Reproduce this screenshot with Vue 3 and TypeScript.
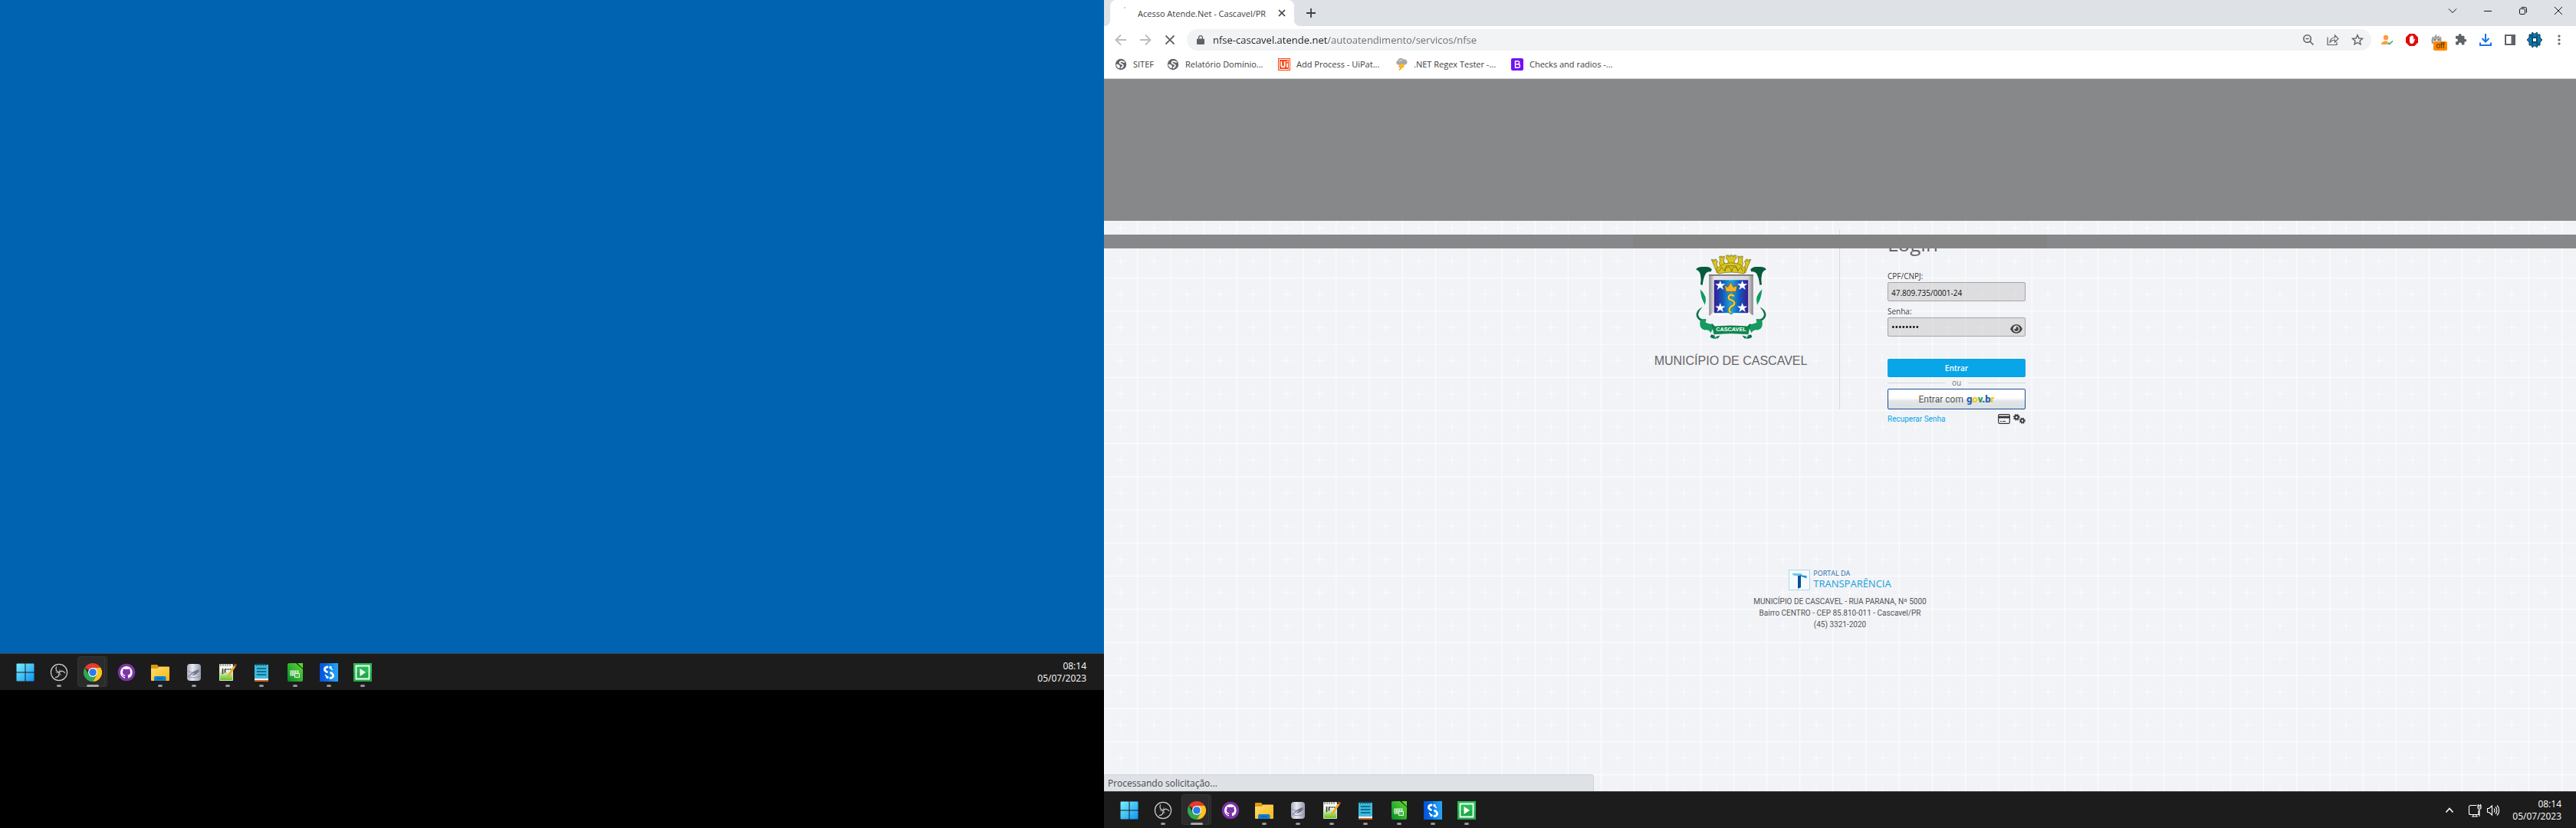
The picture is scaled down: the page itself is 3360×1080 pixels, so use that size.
<script setup lang="ts">
import { ref } from 'vue'

interface TaskItem {
  id: string
  label: string
  running: boolean
  active?: boolean
}

const tasks: TaskItem[] = [
  { id: 'windows', label: 'Iniciar', running: false },
  { id: 'obs', label: 'OBS Studio', running: true },
  { id: 'chrome', label: 'Google Chrome', running: true, active: true },
  { id: 'github', label: 'GitHub Desktop', running: false },
  { id: 'folder', label: 'Explorador de Arquivos', running: true },
  { id: 'database', label: 'Banco de dados', running: true },
  { id: 'editor', label: 'Notepad++', running: true },
  { id: 'notes', label: 'Bloco de Notas', running: true },
  { id: 'calc', label: 'LibreOffice Calc', running: true },
  { id: 'studio', label: 'Studio', running: true },
  { id: 'player', label: 'Camtasia', running: true },
]

const bookmarks = [
  { icon: 'globe', text: 'SITEF', width: 28 },
  { icon: 'globe', text: 'Relatório Domínio...', width: 105 },
  { icon: 'uipath', text: 'Add Process - UiPat...', width: 113 },
  { icon: 'storm', text: '.NET Regex Tester -...', width: 111 },
  { icon: 'bootstrap', text: 'Checks and radios -...', width: 112 },
]

const extensions = ['person', 'stop', 'fox', 'puzzle', 'download', 'panel', 'profile', 'dots']
const windowButtons = ['chevron-down', 'minimize', 'restore', 'close']

const url = ref('nfse-cascavel.atende.net/autoatendimento/servicos/nfse')
const cnpj = ref('47.809.735/0001-24')
const senha = ref('cascavel')
</script>

<template>
  <svg class="sprite" aria-hidden="true">
    <defs>
      <linearGradient id="g-win" x1="0" y1="0" x2="1" y2="1"><stop offset="0" stop-color="#7df0fb" /><stop offset="1" stop-color="#0a94f5" /></linearGradient>
      <linearGradient id="g-fold" x1="0" y1="0" x2="1" y2="1"><stop offset="0" stop-color="#ffdf70" /><stop offset="1" stop-color="#fbb615" /></linearGradient>
      <linearGradient id="g-db" x1="0" x2="1"><stop offset="0" stop-color="#a7abc0" /><stop offset=".4" stop-color="#e8eaf2" /><stop offset="1" stop-color="#9498ac" /></linearGradient>
      <linearGradient id="g-calc" x1="0" y1="1" x2="1" y2="0"><stop offset="0" stop-color="#08882c" /><stop offset="1" stop-color="#5ddc30" /></linearGradient>
      <linearGradient id="g-ed" x1="0" y1="0" x2="0" y2="1"><stop offset=".35" stop-color="#f6fbef" /><stop offset="1" stop-color="#64bf10" /></linearGradient>
      <linearGradient id="g-stu" x1="0" x2="1"><stop offset="0" stop-color="#0453dc" /><stop offset=".5" stop-color="#0873ea" /><stop offset=".5" stop-color="#0b84ec" /><stop offset="1" stop-color="#2ca4f2" /></linearGradient>
      <linearGradient id="g-shield" x1="0" x2="1"><stop offset="0" stop-color="#3a1b92" /><stop offset=".25" stop-color="#1457b8" /><stop offset=".5" stop-color="#19a9e4" /><stop offset=".75" stop-color="#1457b8" /><stop offset="1" stop-color="#3a1b92" /></linearGradient>
      <linearGradient id="g-steel" x1="0" x2="1"><stop offset="0" stop-color="#8d8d8f" /><stop offset=".12" stop-color="#e6e6e8" /><stop offset=".88" stop-color="#d6d6d8" /><stop offset="1" stop-color="#868688" /></linearGradient>
      <linearGradient id="g-h" x1="0" x2="1"><stop offset="0" stop-color="#fff" stop-opacity="0" /><stop offset=".5" stop-color="#fff" /><stop offset="1" stop-color="#fff" stop-opacity="0" /></linearGradient>
      <linearGradient id="g-v" x1="0" y1="0" x2="0" y2="1"><stop offset="0" stop-color="#fff" stop-opacity="0" /><stop offset=".5" stop-color="#fff" /><stop offset="1" stop-color="#fff" stop-opacity="0" /></linearGradient>
    </defs>

    <symbol id="t-windows" viewBox="0 0 24 24"><path fill="url(#g-win)" d="M.5 1.5a1 1 0 0 1 1-1h10v11H.5zM12.5.5h10a1 1 0 0 1 1 1v10h-11zM.5 12.5h11v11h-10a1 1 0 0 1-1-1zM12.5 12.5h11v10a1 1 0 0 1-1 1h-10z" /></symbol>
    <symbol id="t-obs" viewBox="0 0 24 24">
      <circle cx="12" cy="12" r="10.6" fill="#1d1c1e" stroke="#cfcfcf" stroke-width="1.2" />
      <g fill="none" stroke="#c4c4c4" stroke-width="1.3"><path d="M12 12c-3.500-1-5-4-3.300-7.500" /><path d="M12 12c2.600-2.600 6-2.300 8 1" /><path d="M12 12c.9 3.600-1 6.300-5 6.700" /><path d="M12.300 11.500c-.2-1.600.2-2.600 1.200-3.400M11.500 12.300c-1.700.5-2.800.3-3.800-.6M12.600 12.500c1.300 1.200 1.600 2.300 1.100 3.700" stroke-width=".7" /></g>
    </symbol>
    <symbol id="t-chrome" viewBox="0 0 24 24">
      <path fill="#e33b2e" d="M12 12 1.600 6A12 12 0 0 1 22.400 6z" />
      <path fill="#fcc31e" d="M12 12V6h10.400A12 12 0 0 1 12 24l5.200-9z" />
      <path fill="#2da94f" d="M12 12l5.200 3L12 24A12 12 0 0 1 1.600 6l5.200 9z" />
      <circle cx="12" cy="12" r="6" fill="#fff" /><circle cx="12" cy="12" r="4.8" fill="#2b7de9" />
    </symbol>
    <symbol id="t-github" viewBox="0 0 24 24">
      <circle cx="12" cy="12" r="11.2" fill="#7d35a8" />
      <path fill="#fff" d="M12 4.100a8 8 0 0 0-2.500 15.600c.4.100.5-.2.500-.4v-1.500c-2.200.5-2.700-1-2.700-1-.4-.9-.9-1.200-.9-1.200-.7-.5.1-.5.1-.5.8.1 1.200.8 1.200.8.7 1.300 1.900.9 2.300.7.1-.5.3-.9.5-1.100-1.800-.2-3.600-.9-3.600-4 0-.9.3-1.600.8-2.100-.1-.2-.4-1 .1-2.100 0 0 .7-.2 2.200.8a7.500 7.500 0 0 1 4 0c1.500-1 2.200-.8 2.200-.8.5 1.100.2 1.900.1 2.100.5.600.8 1.300.8 2.100 0 3.100-1.900 3.800-3.700 4 .3.300.6.800.6 1.500v2.200c0 .2.1.5.5.4A8 8 0 0 0 12 4.100z" />
    </symbol>
    <symbol id="t-folder" viewBox="0 0 24 24"><path fill="#dc9a0c" d="M0 3a1 1 0 0 1 1-1h7l2 2.500L8 8H0z" /><path fill="url(#g-fold)" d="M0 7h8l2.500-2.500H23a1 1 0 0 1 1 1V22a1 1 0 0 1-1 1H1a1 1 0 0 1-1-1z" /><path fill="#1180ce" d="M4 23v-4a2 2 0 0 1 2-2h11.500a2 2 0 0 1 2 2v4z" /><path fill="#0a5ba0" d="M8 19.500h7.500v1.200H8z" /></symbol>
    <symbol id="t-database" viewBox="0 0 24 24"><rect x="3" y="1" width="18" height="22" rx="4" fill="url(#g-db)" /><path d="M3.500 10c4 3 13 3 17 0M3.500 16.500c4 3 13 3 17 0" fill="none" stroke="#868aa0" stroke-width=".9" /><path fill="#70748a" d="M4 19c3-5 7-9 15-11-1 5-5 8-10 8l5-4c-4 1-7 4-10 7z" /></symbol>
    <symbol id="t-editor" viewBox="0 0 24 24"><path fill="url(#g-ed)" stroke="#dedede" d="M1.500 1.500h17v21h-17z" /><path d="M3 1v3M6 1v3M9 1v3M12 1v3M15 1v3" stroke="#777" stroke-width="1.2" /><path d="M5.500 7v7M8.500 7.500v5M8.500 8h2M11.500 8h2M14.500 8h2" stroke="#333" stroke-width="1.6" fill="none" /><path fill="#edac25" d="m20 3 2.500 1.500L14 17l-2.500 2 .5-3.500z" /><path fill="#be4c36" d="m20.200 2.500 1-2L24 2l-1.300 2.500z" /></symbol>
    <symbol id="t-notes" viewBox="0 0 24 24"><path fill="#40bbdd" d="M3 2h18v19H3z" /><path d="M5.500.5v3M8.500.5v3M11.500.5v3M14.500.5v3M17.500.5v3" stroke="#11546f" stroke-width="1.5" /><path d="M6.500 7h11M6.500 11h11M6.500 15h11" stroke="#0d6f94" stroke-width="1.8" stroke-linecap="round" /><path fill="#f4f4f4" d="M3 20h18v2H3z" /><path fill="#c76522" d="M3 22h18v2H3z" /></symbol>
    <symbol id="t-calc" viewBox="0 0 24 24"><path fill="url(#g-calc)" d="M4 0h9l9 8v14a2 2 0 0 1-2 2H4a2 2 0 0 1-2-2V2a2 2 0 0 1 2-2z" /><path fill="#58dc24" d="M15 0h7v7z" /><path fill="none" stroke="#e6f7e8" stroke-width="1.1" d="M6 10h10v6H6zM6 12h10M6 14h10M9 10v6M12 10v6" /><path fill="#51b849" stroke="#e6f7e8" d="M11.500 13.500h6v5h-6z" /></symbol>
    <symbol id="t-studio" viewBox="0 0 24 24"><path fill="url(#g-stu)" d="M0 0h24v24H0z" /><path d="M10 5c-4 .5-4.500 4-2 5.500l1.500 1M14 19.500c4-.5 4.500-4 2-6l-1.500-1" fill="none" stroke="#fff" stroke-width="2.8" stroke-linecap="round" /><path d="M16.500 8.500 14 6.500M7.500 15.500l2 2.500" stroke="#fff" stroke-width="1.600" stroke-linecap="round" /><circle cx="14" cy="5.500" r="1.7" fill="#fff" /><circle cx="10" cy="18.500" r="1.7" fill="#fff" /></symbol>
    <symbol id="t-player" viewBox="0 0 24 24"><path fill="#20aa4b" d="M0 0h24v24H0z" /><path fill="#2fcb62" d="M0 0h24v12H0z" opacity=".5" /><path fill="none" stroke="#f2fff5" stroke-width="1.8" d="M3.500 3.500h17v17h-17z" /><path fill="#fff" d="m8.500 7 7.500 5-7.500 5z" /></symbol>

    <symbol id="b-globe" viewBox="0 0 16 16"><circle cx="8" cy="8" r="7.2" fill="#5f6368" /><path fill="none" stroke="#fff" stroke-width="1.7" stroke-linecap="round" d="M12.200 5C9.500 3.300 6 4 6.500 6s4.500 1 4.500 3.500c0 1.500-1.500 2.200-2.500 3" /><path fill="#fff" d="M1.800 8c2-.6 4.500.4 5 2.200.3 1.200-.6 1.600-.5 3C3.500 12.500 1.900 10.500 1.800 8z" /></symbol>
    <symbol id="b-uipath" viewBox="0 0 16 16"><path fill="#fa4616" d="M0 0h16v16H0z" /><path fill="none" stroke="#fff" stroke-width="1" d="M1.500 1.500h13v13h-13z" /><path fill="none" stroke="#fff" stroke-width="1.8" d="M4.300 4v5.200c0 3 4.400 3 4.400 0V4M12 6.500V12M12 3.500v1.600" /></symbol>
    <symbol id="b-storm" viewBox="0 0 16 16"><path fill="#a6a8ab" d="M3.500 8.500A3 3 0 0 1 3.300 2.800 4 4 0 0 1 10.500 1.500 3.300 3.300 0 0 1 13 8.500z" /><path fill="#d0d2d4" d="M4 4.500A4 4 0 0 1 10 2.500c-2 0-3 2-6 2z" /><path fill="#f9bc1c" stroke="#d88f08" stroke-width=".5" d="M6.500 7h5L9.800 10h2L5 16l1.600-4.500H4.300z" /></symbol>
    <symbol id="b-bootstrap" viewBox="0 0 16 16"><rect width="16" height="16" rx="2" fill="#7311f5" /><path fill="none" stroke="#fff" stroke-width="1.4" d="M5.500 3.700h3.200a2 2 0 0 1 0 4.100H5.500zM5.500 7.800h3.700a2.200 2.200 0 0 1 0 4.500H5.500z" /></symbol>

    <symbol id="x-person" viewBox="0 0 16 16"><circle cx="6" cy="5" r="3.2" fill="#ff9b38" /><path fill="#ff9b38" d="M0 14c0-3 3-4.500 6-4.500 1 0 1.600.1 2.200.4L7.500 12l1.800 2z" /><path d="m8.500 11.500 2 2 4.500-4" fill="none" stroke="#21a05a" stroke-width="1.4" /></symbol>
    <symbol id="x-stop" viewBox="0 0 16 16"><path fill="#e1090d" d="M4.700 0h6.600L16 4.700v6.600L11.300 16H4.700L0 11.300V4.700z" /><path fill="#fff" d="M5 8V4.500c0-.8 1.200-.8 1.200 0V3.300c0-.8 1.300-.8 1.300 0v-.6c0-.8 1.300-.8 1.300 0v.8c0-.8 1.300-.8 1.300 0v4.700l1-1.400c.5-.6 1.300-.1 1 .5L10.500 11c-.7 1.400-1.300 2-2.600 2C5.800 13 5 11.800 5 10z" /></symbol>
    <symbol id="x-fox" viewBox="0 0 16 16"><path fill="#a3a3a3" d="M2 13C.8 9 1.500 6 3.500 3l1 2L7.500.5 9 4l2.500-2 .5 3 2-1.500c.6 3 1 6-.5 9.500z" /><path fill="#e3e3e3" d="m4 9 2-3 2 2 2-2 2 3v4H4z" /><path stroke="#222" stroke-width="1.3" d="M5 8.200h2M9.500 8.200h2" /></symbol>
    <symbol id="x-puzzle" viewBox="0 0 16 16"><path fill="#5f6368" d="M13.500 7h-1V4a1.300 1.300 0 0 0-1.300-1.300H8.500v-.9a1.800 1.800 0 0 0-3.600 0v.9H2.300A1.300 1.300 0 0 0 1 4v2.600h.9a2 2 0 0 1 0 4H1v2.600a1.300 1.300 0 0 0 1.300 1.300h2.600v-.9a2 2 0 0 1 4 0v.9h2.300a1.300 1.300 0 0 0 1.300-1.300v-2.600h1a1.800 1.800 0 0 0 0-3.600z" /></symbol>
    <symbol id="x-download" viewBox="0 0 16 16"><path d="M8 0v10M3.500 6 8 10.500 12.500 6M1 11.500V15h14v-3.500" fill="none" stroke="#1a73e8" stroke-width="2" /></symbol>
    <symbol id="x-panel" viewBox="0 0 16 16"><path d="M2 2h12v12H2z" fill="#fff" stroke="#5f6368" stroke-width="2" /><path fill="#5f6368" d="M9.500 2H14v12H9.500z" /></symbol>
    <symbol id="x-profile" viewBox="0 0 20 20"><path fill="#087cb2" stroke="#123c54" stroke-width="1" d="m7 0 3 2.500L13 0l1 3h3v4l3 3-3 3v4h-3l-1 3-3-2.500L7 20l-1-3H3v-4l-3-3 3-3V3h3z" /><path fill="none" stroke="#123c54" stroke-width="1" d="m3 7 4-4v11M13 3v4H6M17 13l-4 4V6M7 17v-4h7" /><path fill="#fff" stroke="#123c54" d="M7.500 7.500h5v5h-5z" /></symbol>
    <symbol id="x-dots" viewBox="0 0 16 16"><g fill="#5f6368"><circle cx="8" cy="3" r="1.6" /><circle cx="8" cy="8" r="1.6" /><circle cx="8" cy="13" r="1.6" /></g></symbol>

    <symbol id="w-chevron-down" viewBox="0 0 12 12"><path d="m1 3.500 5 5 5-5" fill="none" stroke="#111" /></symbol>
    <symbol id="w-minimize" viewBox="0 0 12 12"><path d="M1 6.500h10" stroke="#111" /></symbol>
    <symbol id="w-restore" viewBox="0 0 12 12"><rect x="1.5" y="3.5" width="7" height="7" rx="1.2" fill="none" stroke="#111" /><path d="M3.500 1.500h5a2 2 0 0 1 2 2v5" fill="none" stroke="#111" /></symbol>
    <symbol id="w-close" viewBox="0 0 12 12"><path d="m1 1 10 10M11 1 1 11" stroke="#111" /></symbol>
  </svg>

  <div class="screens">
    <section class="screen-left">
      <div class="wallpaper"></div>
      <footer class="taskbar">
        <nav class="tasks">
          <button v-for="t in tasks" :key="t.id" class="task" :class="{ active: t.active }" :aria-label="t.label">
            <svg class="task-icon"><use :href="'#t-' + t.id" /></svg>
            <span v-if="t.running" class="mark"></span>
          </button>
        </nav>
        <div class="tray">
          <time class="clock"><span>08:14</span><span>05/07/2023</span></time>
        </div>
      </footer>
      <div class="void"></div>
    </section>

    <section class="screen-right">
      <header class="tabstrip">
        <div class="tab">
          <span class="spinner"></span>
          <span class="tab-title">Acesso Atende.Net - Cascavel/PR</span>
          <button class="plain" aria-label="Fechar guia"><svg width="10" height="10" viewBox="0 0 10 10"><path d="m1 1 8 8M9 1 1 9" stroke="#3c4043" stroke-width="1.7" /></svg></button>
        </div>
        <button class="plain new-tab" aria-label="Nova guia"><svg width="12" height="12" viewBox="0 0 12 12"><path d="M6 0v12M0 6h12" stroke="#3c4043" stroke-width="1.8" /></svg></button>
        <div class="win-buttons">
          <button v-for="w in windowButtons" :key="w" class="plain win" :aria-label="w"><svg width="12" height="12"><use :href="'#w-' + w" /></svg></button>
        </div>
      </header>

      <div class="toolbar">
        <div class="nav">
          <button class="plain" aria-label="Voltar"><svg width="16" height="16" viewBox="0 0 16 16"><path d="M15 8H2M8 1.500 1.500 8 8 14.500" fill="none" stroke="#babcbe" stroke-width="1.8" /></svg></button>
          <button class="plain" aria-label="Avançar"><svg width="16" height="16" viewBox="0 0 16 16"><path d="M1 8h13M8 1.500 14.500 8 8 14.500" fill="none" stroke="#babcbe" stroke-width="1.8" /></svg></button>
          <button class="plain" aria-label="Parar"><svg width="16" height="16" viewBox="0 0 16 16"><path d="m2.500 2.500 11 11M13.500 2.500l-11 11" stroke="#5f6368" stroke-width="1.8" /></svg></button>
        </div>
        <div class="omnibox">
          <svg width="10" height="12" viewBox="0 0 10 12"><path fill="#5f6368" fill-rule="evenodd" d="M1 4.500h1V3a3 3 0 0 1 6 0v1.500h1a1 1 0 0 1 1 1V11a1 1 0 0 1-1 1H1a1 1 0 0 1-1-1V5.500a1 1 0 0 1 1-1zm2.300 0h3.400V3a1.700 1.700 0 0 0-3.400 0z" /></svg>
          <input v-model="url" class="url" type="text" aria-label="Endereço" />
          <div class="omni-actions">
            <button class="plain" aria-label="Zoom"><svg width="16" height="16" viewBox="0 0 16 16"><circle cx="6.5" cy="6.5" r="4.7" fill="none" stroke="#5f6368" stroke-width="1.6" /><path d="m10 10 4.500 4.500M4.500 6.500h4" stroke="#5f6368" stroke-width="1.6" /></svg></button>
            <button class="plain" aria-label="Compartilhar"><svg width="16" height="16" viewBox="0 0 16 16"><path d="M1 4.500v10h12V11M4 11c.5-4 3-6 6.500-6V2L15 6.500 10.500 11V8C8 8 6 9 4 11z" fill="none" stroke="#5f6368" stroke-width="1.2" /></svg></button>
            <button class="plain" aria-label="Favorito"><svg width="16" height="16" viewBox="0 0 16 16"><path d="m8 1.800 1.900 4.200 4.500.4-3.400 3 1 4.500-4-2.400-4 2.400 1-4.500-3.400-3 4.500-.4z" fill="none" stroke="#5f6368" stroke-width="1.4" /></svg></button>
          </div>
        </div>
        <div class="extensions">
          <button v-for="x in extensions" :key="x" class="plain ext" :aria-label="x">
            <svg :class="x === 'profile' ? 'avatar' : 'ext-icon'"><use :href="'#x-' + x" /></svg>
            <span v-if="x === 'fox'" class="badge">off</span>
          </button>
        </div>
      </div>

      <nav class="bookmarks">
        <a v-for="b in bookmarks" :key="b.text" href="#" class="bookmark">
          <svg width="16" height="16"><use :href="'#b-' + b.icon" /></svg>
          <span :style="{ width: b.width + 'px' }">{{ b.text }}</span>
        </a>
      </nav>

      <main class="page">
        <svg class="backdrop" aria-hidden="true">
          <defs>
            <pattern id="mesh" width="48" height="48" patternUnits="userSpaceOnUse" patternTransform="scale(.9)">
              <path d="M0 .5h48M.5 0v48" stroke="#fff" stroke-width="1.300" opacity=".9" />
              <rect x="12" y="23.5" width="25" height="1.5" fill="url(#g-h)" opacity=".7" />
              <rect x="23.5" y="12" width="1.5" height="25" fill="url(#g-v)" opacity=".7" />
            </pattern>
          </defs>
          <rect width="100%" height="100%" fill="url(#mesh)" />
        </svg>

        <div class="login-panel">
          <div class="city">
            <svg class="crest" viewBox="36 36 278 334" role="img" aria-label="Brasão de Cascavel">
              <g fill="#d9c51f" stroke="#6d6412" stroke-width="2">
                <path d="M97 55h7v6h5v-7h7v6h6l-4 14 6 14 10 16-15 4-10-26z" />
                <path d="M253 55h-7v6h-5v-7h-7v6h-6l4 14-6 14-10 16 15 4 10-26z" />
                <path d="M129 42h8v5h5v-5h7l-3 20 6 10-18 14-6-16 3-10zM221 42h-8v5h-5v-5h-7l3 20-6 10 18 14 6-16-3-10z" />
                <path d="M156 38h9v6h5v-6h11v6h5v-6h9v15l-7 5v13h-25V58l-7-5z" />
                <path d="m118 90 28-18q29-9 58 0l28 18-7 21q-50-12-100 0z" />
              </g>
              <path d="m128 101 9-16 12 14 7-19h38l7 19 12-14 9 16M151 103q1-18 13-18t12 18M178 103q0-18 11-18t13 18" fill="none" stroke="#81761c" stroke-width="3" />
              <g id="mantle">
                <path fill="#075b3a" d="M36 94q9-13 34-10 20-3 29 10l-4 9q-10-3-18 5-10 11-15 48l-8-3q4-18 0-38-3-16-18-21z" />
                <path fill="#0c9b61" d="M53 172q15 14 21 31 3 14-2 31-16-25-19-62z" />
                <path fill="#087346" d="M62 242q-14 14-17 28 2 15 15 20l17 2-4 9-17-3q-21-13-18-30 3-17 24-26z" />
                <path fill="#169a60" d="M52 300q8-12 24-11l-3 13q14 9 31 8l2 11-11 23q-8-14-24-11-22-3-19-33z" />
                <path fill="#08754a" d="m97 350 13 4q-2 8 9 12-19 4-27-7zM112 360l20-6-10 13z" />
              </g>
              <use href="#mantle" transform="matrix(-1 0 0 1 350 0)" />
              <path fill="url(#g-steel)" d="M88 114h174v160q-8 0-16-12h-55l-16 10-16-10h-55q-8 12-16 15z" />
              <path fill="#707074" d="M88 114h174v5H88z" />
              <path fill="#fff" d="M105 264h140v10H105z" />
              <path fill="url(#g-shield)" d="M108 136h134v130h-58l-9 7-9-7h-58z" />
              <g fill="#fff"><path id="star" d="m132 138 5 13h15l-12 9 5 14-13-9-13 9 5-14-12-9h15z" /><use href="#star" x="87" /><use href="#star" y="88" /><use href="#star" x="87" y="88" /></g>
              <path fill="#f6b12b" stroke="#684709" stroke-width="2" d="m149 157 13 7 11-20 12 20 14-7-5 25h-39z" />
              <path d="M187 200q-13-12-21 0-6 11 11 15 19 8 6 21-19 9-15 22 3 4 8 6" fill="none" stroke="#705110" stroke-width="10" />
              <path d="M187 200q-13-12-21 0-6 11 11 15 19 8 6 21-19 9-15 22 3 4 8 6" fill="none" stroke="#f8cf35" stroke-width="7" />
              <path fill="#08894d" stroke="#066b3b" stroke-width="2" d="M111 319q64-6 128 0l11-11-8 41q-67-7-134 0l-9-41z" />
              <text x="175" y="339" text-anchor="middle" class="crest-text">CASCAVEL</text>
            </svg>
            <p class="city-name">MUNICÍPIO DE CASCAVEL</p>
          </div>

          <form class="login-form" @submit.prevent>
            <h1>Login</h1>
            <label for="cnpj">CPF/CNPJ:</label>
            <input id="cnpj" v-model="cnpj" class="field" type="text" />
            <label for="senha" class="second">Senha:</label>
            <div class="password">
              <input id="senha" v-model="senha" class="field" type="password" />
              <button type="button" class="plain eye" aria-label="Mostrar senha"><svg width="16" height="14" viewBox="0 0 16 14"><path fill="#444" fill-rule="evenodd" d="M8 1c3.500 0 6.200 2.300 7.600 5.200a2 2 0 0 1 0 1.600C14.200 10.700 11.500 13 8 13S1.800 10.700.4 7.800a2 2 0 0 1 0-1.600C1.800 3.300 4.500 1 8 1zm0 1.600a4.400 4.400 0 1 0 0 8.800 4.400 4.400 0 0 0 0-8.800z" /><path fill="#444" d="M8 4.100a2.900 2.900 0 1 1-2.900 2.900c.8.500 2 .3 2.400-.5.400-.7.200-1.600.5-2.400z" /></svg></button>
            </div>
            <button type="submit" class="enter">Entrar</button>
            <div class="or"><span>ou</span></div>
            <button type="button" class="gov"><span>Entrar com</span><b><i class="blue">g</i><i class="yellow">o</i><i class="green">v</i><i class="blue">.b</i><i class="yellow">r</i></b></button>
            <div class="links">
              <a href="#">Recuperar Senha</a>
              <button type="button" class="plain" aria-label="Certificado"><svg width="16" height="13" viewBox="0 0 16 13"><rect x=".7" y=".7" width="14.6" height="11.6" rx="1.2" fill="none" stroke="#333" stroke-width="1.2" /><path fill="#333" d="M1 2.800h14v2.700H1zM3 9h2v1H3zM6 9h4v1H6z" /></svg></button>
              <button type="button" class="plain" aria-label="Configurações"><svg width="16" height="13" viewBox="0 0 16 13"><g fill="none" stroke="#333"><circle cx="4.3" cy="4.3" r="2.3" stroke-width="1.8" /><circle cx="4.3" cy="4.3" r="3.7" stroke-width="1.2" stroke-dasharray="1.6 1.3" /><circle cx="11.8" cy="8.8" r="2.1" stroke-width="1.7" /><circle cx="11.8" cy="8.8" r="3.4" stroke-width="1.2" stroke-dasharray="1.5 1.2" /></g></svg></button>
            </div>
          </form>
        </div>

        <div class="page-footer">
          <a href="#" class="portal">
            <svg width="28" height="27" viewBox="0 0 84 81"><path fill="#f4fafd" stroke="#a9d9ea" stroke-width="3" d="M1.500 1.500h81v78h-81z" /><path fill="#6cc6ec" d="m15 14 33 1 7 7-10 5-28-5z" /><path fill="#1296d6" d="m45 22 25 2 1 10-20-6z" /><path fill="#0b4f92" d="m36 25 12-3v48l-12 4z" /></svg>
            <span class="portal-text"><span>PORTAL DA</span><span>TRANSPARÊNCIA</span></span>
          </a>
          <p>MUNICÍPIO DE CASCAVEL - RUA PARANA, Nº 5000</p>
          <p>Bairro CENTRO - CEP 85.810-011 - Cascavel/PR</p>
          <p>(45) 3321-2020</p>
        </div>

        <div class="veil" aria-hidden="true">
          <div class="veil-top"></div>
          <div class="veil-strip"><span></span></div>
        </div>
        <div class="status">Processando solicitação...</div>
      </main>

      <footer class="taskbar">
        <nav class="tasks">
          <button v-for="t in tasks" :key="t.id" class="task" :class="{ active: t.active }" :aria-label="t.label">
            <svg class="task-icon"><use :href="'#t-' + t.id" /></svg>
            <span v-if="t.running" class="mark"></span>
          </button>
        </nav>
        <div class="tray">
          <button class="plain tray-up" aria-label="Ícones ocultos"><svg width="12" height="12" viewBox="0 0 12 12"><path d="m1.500 8.500 4.500-5 4.500 5" fill="none" stroke="#fff" stroke-width="1.6" /></svg></button>
          <button class="plain tray-net" aria-label="Rede"><svg width="18" height="18" viewBox="0 0 18 18"><path d="M11.500 2.500h-8a2 2 0 0 0-2 2v8a2 2 0 0 0 2 2H14V9M5 17h8M7 14.500V17M11 14.500V17M13 2.500h4V6a1 1 0 0 1-1 1h-2a1 1 0 0 1-1-1zM15 7v10M13.500 2.500V1M16.500 2.500V1M13 4.500h4" fill="none" stroke="#fff" stroke-width="1.1" /></svg></button>
          <button class="plain tray-sound" aria-label="Volume"><svg width="18" height="16" viewBox="0 0 18 16"><path d="M1.500 5.500h2L7.500 2v12l-4-3.500h-2zM10 5.500c1.300 1.500 1.300 3.500 0 5M12 3.500c2.500 2.500 2.500 6.500 0 9M14 1.500c3.500 3.500 3.500 9.500 0 13" fill="none" stroke="#fff" stroke-width="1.1" /></svg></button>
          <time class="clock"><span>08:14</span><span>05/07/2023</span></time>
        </div>
      </footer>
    </section>
  </div>
</template>

<style>
body {
  background: #000;
}
</style>

<style scoped>
* {
  box-sizing: border-box;
}
.sprite {
  position: absolute;
  width: 0;
  height: 0;
}
.screens {
  display: flex;
  min-height: 100vh;
  background: #000;
  font-family: "Open Sans", "Noto Sans", sans-serif;
  font-size: 12px;
}
svg {
  display: block;
  flex: none;
}
.plain {
  display: flex;
  align-items: center;
  justify-content: center;
  padding: 0;
  border: 0;
  background: none;
}
.screen-left {
  display: flex;
  flex: 3 1 0;
  flex-direction: column;
  min-width: 0;
}
.wallpaper {
  flex: 1;
  background: #0063b1;
}
.void {
  height: calc(100vh / 6);
}
.screen-right {
  display: flex;
  flex: 4 1 0;
  flex-direction: column;
  min-width: 0;
  background: #fff;
}

.taskbar {
  display: flex;
  align-items: stretch;
  justify-content: space-between;
  height: 48px;
  padding: 0 19px 0 11px;
  border-top: 1px solid #414141;
  background: #1c1c1c;
}
.screen-left .taskbar {
  padding-right: 23px;
}
.tasks {
  display: flex;
}
.task {
  display: flex;
  position: relative;
  align-items: center;
  justify-content: center;
  width: 44px;
  padding: 0;
  border: 0;
  background: none;
}
.task-icon {
  width: 24px;
  height: 24px;
}
.active::before {
  position: absolute;
  inset: 3px 6px 4px 2px;
  border: 1px solid #363636;
  border-radius: 4px;
  background: #2b2b2b;
  box-shadow: 3px 0 0 -1px #292929, 3px 0 0 0 #333;
  content: "";
}
.active .task-icon {
  position: relative;
}
.mark {
  position: absolute;
  bottom: 4px;
  width: 6px;
  height: 3px;
  border-radius: 2px;
  background: #979797;
}
.active .mark {
  width: 16px;
  background: #aaa9a5;
}
.tray {
  display: flex;
  align-items: center;
}
.tray-up {
  margin-right: 18px;
}
.tray-net {
  margin-right: 6px;
}
.tray-sound {
  margin-right: 16px;
}
.clock {
  display: flex;
  flex-direction: column;
  align-items: flex-end;
  color: #fff;
  font-size: 12px;
  line-height: 16px;
}

.tabstrip {
  display: flex;
  height: 34px;
  padding-left: 8px;
  background: #dee1e6;
}
.tab {
  display: flex;
  position: relative;
  align-items: center;
  width: 240px;
  padding: 0 11px 0 18px;
  border-radius: 8px 8px 0 0;
  background: #fff;
}
.tab::before,
.tab::after {
  position: absolute;
  bottom: 0;
  width: 8px;
  height: 8px;
  content: "";
}
.tab::before {
  left: -8px;
  background: radial-gradient(circle at 0 0, transparent 8px, #fff 8px);
}
.tab::after {
  right: -8px;
  background: radial-gradient(circle at 100% 0, transparent 8px, #fff 8px);
}
.spinner {
  align-self: flex-start;
  width: 2px;
  height: 2px;
  margin: 9px 16px 0 0;
  background: #b9d2fb;
}
.tab-title {
  flex: 1;
  overflow: hidden;
  color: #3c4043;
  font-size: 11px;
  white-space: nowrap;
}
.new-tab {
  width: 28px;
  margin-left: 8px;
}
.win-buttons {
  display: flex;
  height: 28px;
  margin-left: auto;
}
.win {
  width: 46px;
}
.toolbar {
  display: flex;
  align-items: center;
  height: 36px;
  padding-left: 14px;
}
.nav {
  display: flex;
  gap: 16px;
}
.omnibox {
  display: flex;
  flex: 1;
  align-items: center;
  height: 28px;
  margin-left: 14px;
  padding: 0 10px 0 13px;
  border-radius: 14px;
  background: #f1f3f4;
}
.url {
  flex: 1;
  min-width: 0;
  margin-left: 11px;
  padding: 0;
  border: 0;
  outline: 0;
  background: linear-gradient(90deg, #202124 150px, #6a6e73 150px);
  background-clip: text;
  color: #202124;
  font-family: inherit;
  font-size: 13px;
  -webkit-text-fill-color: transparent;
}
.omni-actions {
  display: flex;
  gap: 16px;
}
.extensions {
  display: flex;
  padding: 0 6px 0 5px;
}
.ext {
  position: relative;
  width: 32px;
  height: 28px;
}
.ext-icon {
  width: 16px;
  height: 16px;
}
.avatar {
  width: 20px;
  height: 20px;
}
.badge {
  position: absolute;
  right: 2px;
  bottom: 0;
  width: 18px;
  border-radius: 2px;
  background: #ff8800;
  color: #3c2708;
  font-size: 10px;
  line-height: 12px;
}
.bookmarks {
  display: flex;
  align-items: center;
  gap: 16px;
  height: 33px;
  padding: 0 0 5px 14px;
  border-bottom: 1px solid #d0d2d5;
}
.bookmark {
  display: flex;
  align-items: center;
  gap: 8px;
  color: #3c4043;
  font-size: 11px;
  text-decoration: none;
  white-space: nowrap;
}

.page {
  display: flex;
  position: relative;
  flex: 1;
  flex-direction: column;
  align-items: center;
  padding-top: 197px;
  background: #f2f3f7;
}
.backdrop {
  position: absolute;
  inset: 0;
  width: 100%;
  height: 100%;
}
.login-panel {
  display: grid;
  position: relative;
  grid-template-columns: 1fr 1fr;
  width: 540px;
}
.city {
  display: flex;
  flex-direction: column;
  align-items: center;
  align-self: start;
  height: 234px;
  padding: 32px 14px 0 0;
  border-right: 1px solid #d8d9dc;
}
.crest {
  width: 92px;
  height: 111px;
}
.crest-text {
  fill: #fff;
  font: bold 22px "Liberation Sans", sans-serif;
}
.city-name {
  margin: 18px 0 0;
  color: #666;
  font: 16px/20px "Liberation Sans", Arial, sans-serif;
}
.login-form {
  display: flex;
  flex-direction: column;
  padding: 0 28px 0 62px;
  color: #3c3c3c;
  font-size: 10px;
}
h1 {
  margin: 0 0 16px;
  color: #666;
  font-size: 26px;
  font-weight: 500;
  line-height: 36px;
}
label {
  line-height: 16px;
}
.second {
  margin-top: 5px;
}
.field {
  width: 100%;
  height: 25px;
  padding: 2px 4px 0;
  border: 1px solid #a5a5a7;
  border-radius: 2px;
  outline: 0;
  background: rgba(200, 200, 200, .5);
  color: #111;
  font-family: inherit;
  font-size: 10px;
}
.password {
  position: relative;
  height: 25px;
  margin-bottom: 29px;
}
.password .field {
  padding-top: 0;
  color: #000;
  font-size: 12px;
}
.eye {
  position: absolute;
  top: 8px;
  right: 4px;
}
.enter {
  height: 24px;
  padding: 0;
  border: 0;
  border-radius: 2px;
  background: #08a5e8;
  color: #fff;
  font: 600 10px "Open Sans", sans-serif;
}
.or {
  display: flex;
  align-items: center;
  gap: 9px;
  height: 15px;
  color: #777;
  line-height: 15px;
}
.or::before,
.or::after {
  flex: 1;
  height: 1px;
  background: #d5d6d9;
  content: "";
}
.gov {
  display: flex;
  align-items: center;
  justify-content: center;
  gap: 4px;
  height: 27px;
  padding: 0;
  border: 1px solid #1b4f8f;
  border-radius: 2px;
  background: linear-gradient(#fff 45%, #e2e5e8 60%, #dcdfe2);
  color: #555;
  font: 12px Roboto, sans-serif;
}
.gov b {
  font-size: 13px;
  font-weight: 900;
}
.gov i {
  font-style: normal;
}
.blue {
  color: #2864ae;
}
.yellow {
  color: #fdc41b;
}
.green {
  color: #31a547;
}
.links {
  display: flex;
  align-items: center;
  gap: 4px;
  height: 24px;
}
.links a {
  margin-right: auto;
  color: #08a5e8;
  font-family: Roboto, sans-serif;
  text-decoration: none;
}
.page-footer {
  position: relative;
  margin-top: 185px;
  color: #555;
  font-family: Roboto, sans-serif;
  font-size: 10px;
  line-height: 15px;
  text-align: center;
}
.portal {
  display: flex;
  justify-content: center;
  gap: 4px;
  margin-bottom: 7px;
  font-family: "Open Sans", sans-serif;
  text-decoration: none;
}
.portal-text {
  display: flex;
  flex-direction: column;
  color: #139fda;
  font-size: 13px;
  line-height: 18px;
  text-align: left;
}
.portal-text span:first-child {
  color: #2a6cab;
  font-size: 9px;
  line-height: 9px;
}
.page-footer p {
  margin: 0;
}
.veil {
  position: absolute;
  inset: 0;
  pointer-events: none;
}
.veil-top {
  height: 185px;
  margin-bottom: 18px;
  background: rgba(117, 118, 119, .86);
}
.veil-strip {
  display: flex;
  justify-content: center;
  height: 18px;
  background: rgba(117, 118, 119, .86);
}
.veil-strip span {
  width: 540px;
  background: #848484;
}
.status {
  position: absolute;
  bottom: 0;
  left: 0;
  width: 33.3%;
  height: 22px;
  padding-left: 5px;
  border: 1px solid #d0d3d8;
  border-width: 1px 1px 0 0;
  border-radius: 0 4px 0 0;
  background: #dee1e6;
  color: #44474b;
  line-height: 22px;
}
</style>
